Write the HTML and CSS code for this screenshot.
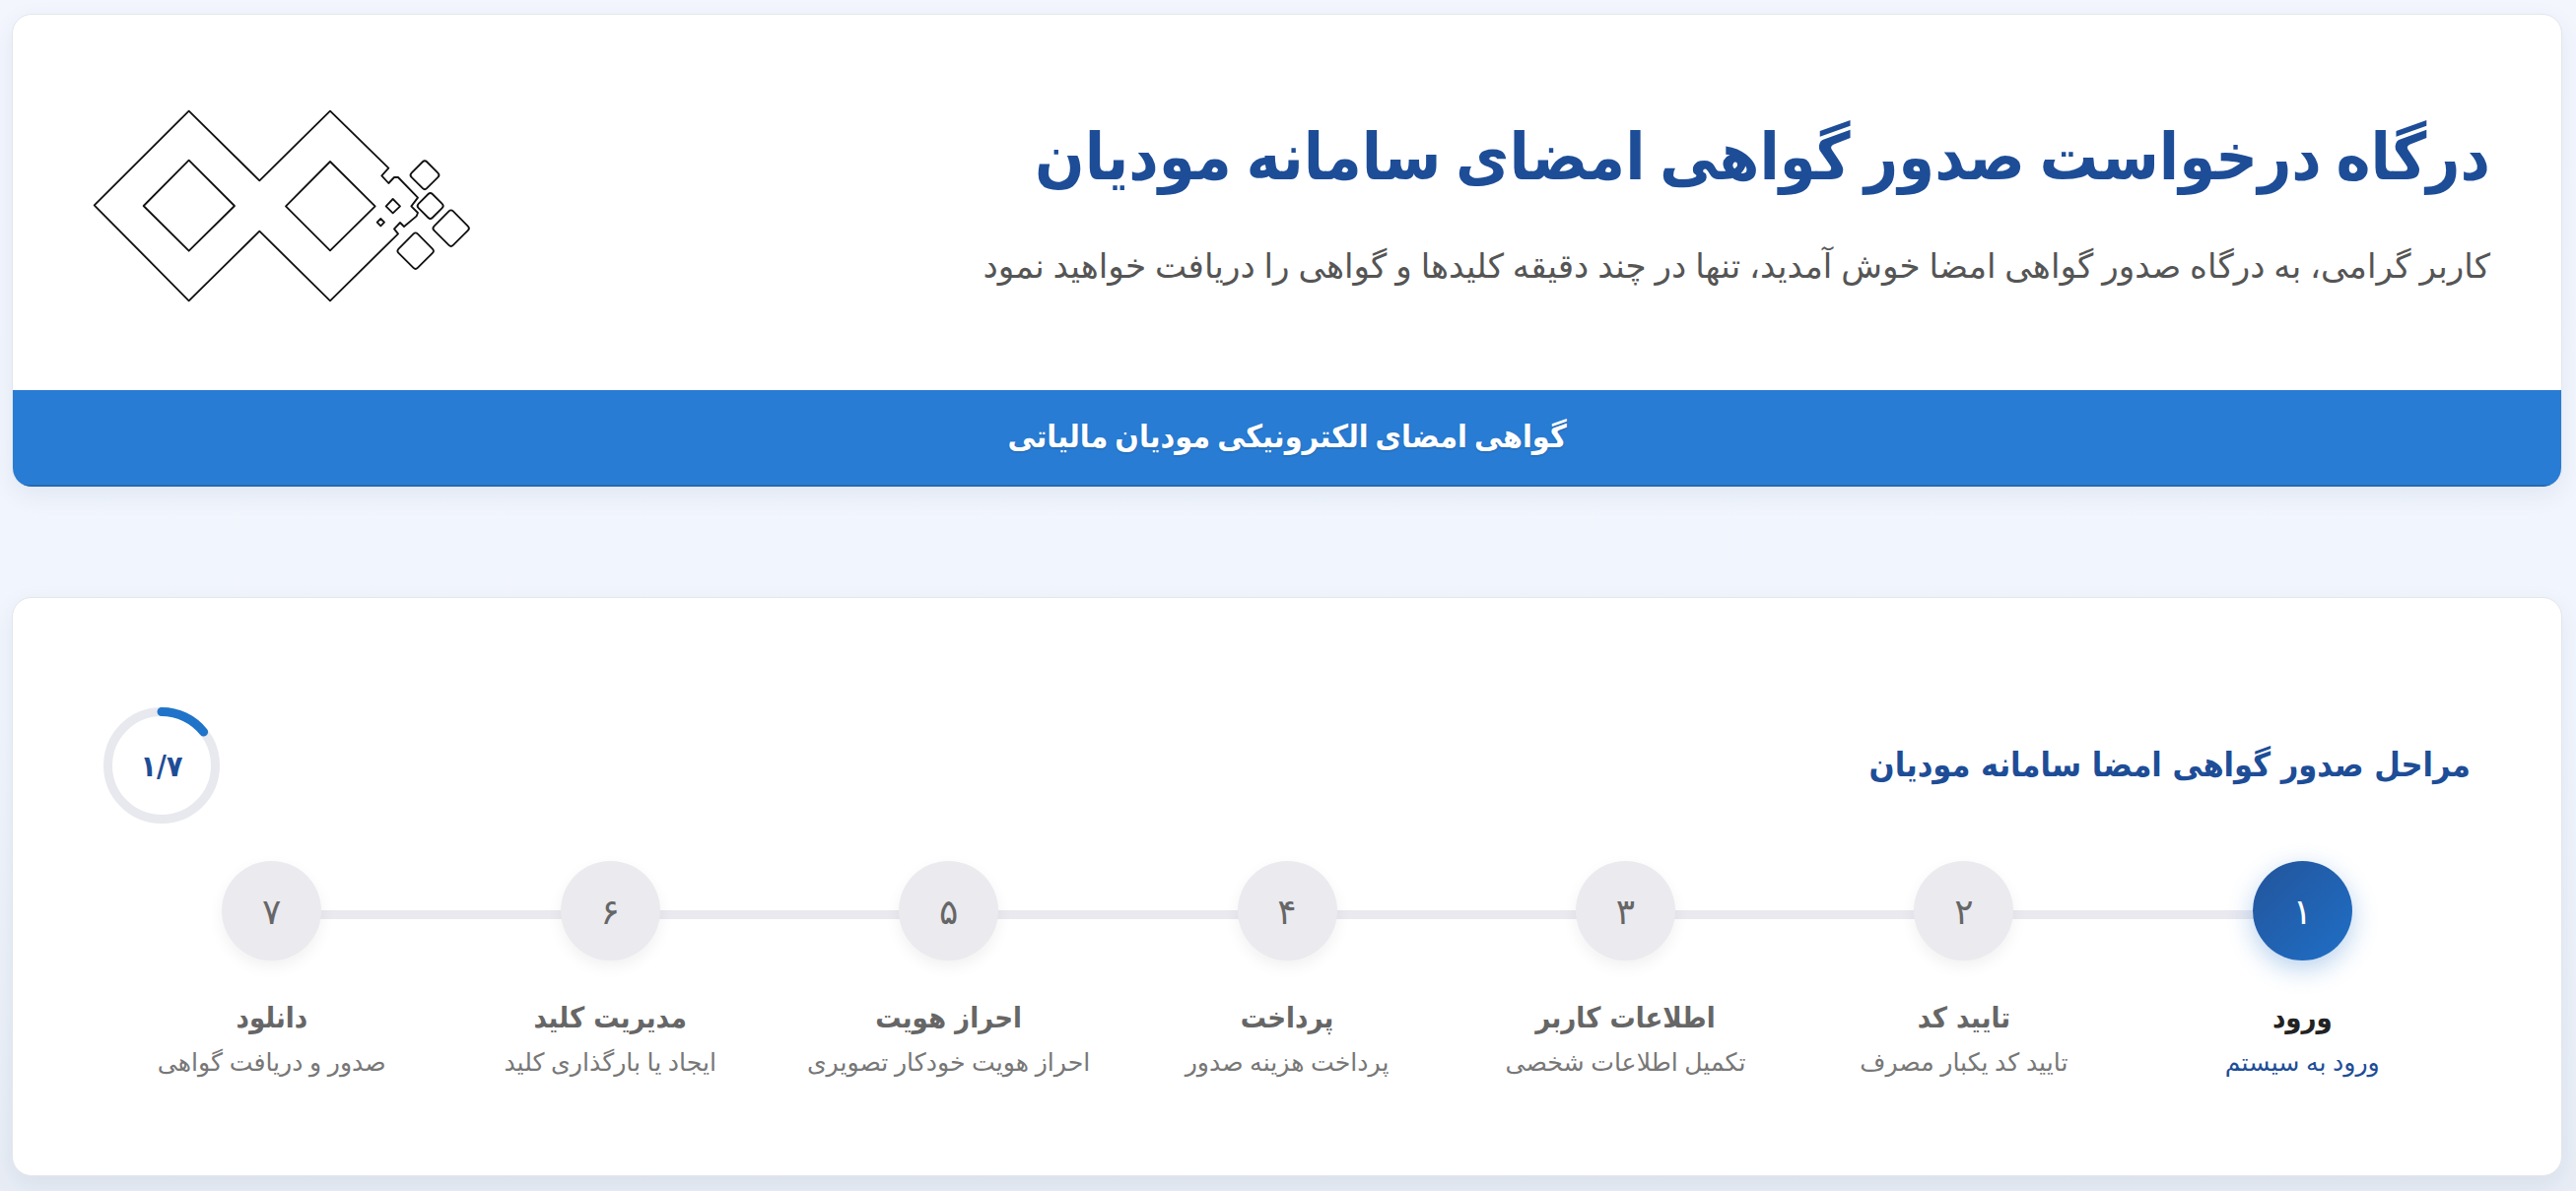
FILE: index.html
```html
<!DOCTYPE html>
<html lang="fa" dir="rtl">
<head>
<meta charset="utf-8">
<title>درگاه درخواست صدور گواهی امضای سامانه مودیان</title>
<link rel="stylesheet" href="styles.css">
</head>
<body>
<header class="card hero">
  <div class="hero-main">
    <div class="hero-text">
      <h1 class="hero-title">درگاه درخواست صدور گواهی امضای سامانه مودیان</h1>
      <p class="hero-sub">کاربر گرامی، به درگاه صدور گواهی امضا خوش آمدید، تنها در چند دقیقه کلیدها و گواهی را دریافت خواهید نمود</p>
    </div>
    <svg class="logo" viewBox="0 0 1380 780" fill="none" stroke="#111" stroke-width="5.5" stroke-linejoin="round">
      <path d="M107 385 L395 98 L610 310 L825 98 L1003 272 L982 295 L1003 318 L1020 300 L1032 300 L1092 362 L1072 388 L1092 408 L1088 418 L1050 450 L1038 438 L1020 457 L1032 472 L825 676 L610 464 L395 676 Z"/>
      <path d="M257 387 L395 248 L534 387 L395 524 Z"/>
      <path d="M690 388 L825 252 L962 388 L825 523 Z"/>
      <path d="M995 388 L1016 366 L1038 388 L1016 409 Z"/>
      <path d="M968 437 L979 426 L990 437 L979 448 Z"/>
      <rect x="1080" y="260" width="66" height="66" rx="9" transform="rotate(45 1113 293)"/>
      <rect x="1100" y="357" width="60" height="60" rx="9" transform="rotate(45 1130 387)"/>
      <rect x="1152" y="414" width="82" height="82" rx="9" transform="rotate(45 1193 455)"/>
      <rect x="1044" y="483" width="82" height="82" rx="9" transform="rotate(45 1085 524)"/>
    </svg>
  </div>
  <div class="hero-bar">گواهی امضای الکترونیکی مودیان مالیاتی</div>
</header>

<main class="card steps-card">
  <div class="steps-head">
    <h2 class="steps-title">مراحل صدور گواهی امضا سامانه مودیان</h2>
    <div class="ring">
      <svg class="ring-svg" viewBox="0 0 118 118" fill="none" stroke-width="9">
        <circle class="ring-track" cx="59" cy="59" r="54.5"/>
        <path class="ring-arc" d="M59 4.5 A54.5 54.5 0 0 1 101.6 25"/>
      </svg>
      <span class="ring-label">۱/۷</span>
    </div>
  </div>
  <ol class="steps">
    <li class="step active"><span class="step-num">۱</span><span class="step-name">ورود</span><span class="step-desc">ورود به سیستم</span></li>
    <li class="step"><span class="step-num">۲</span><span class="step-name">تایید کد</span><span class="step-desc">تایید کد یکبار مصرف</span></li>
    <li class="step"><span class="step-num">۳</span><span class="step-name">اطلاعات کاربر</span><span class="step-desc">تکمیل اطلاعات شخصی</span></li>
    <li class="step"><span class="step-num">۴</span><span class="step-name">پرداخت</span><span class="step-desc">پرداخت هزینه صدور</span></li>
    <li class="step"><span class="step-num">۵</span><span class="step-name">احراز هویت</span><span class="step-desc">احراز هویت خودکار تصویری</span></li>
    <li class="step"><span class="step-num">۶</span><span class="step-name">مدیریت کلید</span><span class="step-desc">ایجاد یا بارگذاری کلید</span></li>
    <li class="step"><span class="step-num">۷</span><span class="step-name">دانلود</span><span class="step-desc">صدور و دریافت گواهی</span></li>
  </ol>
</main>
</body>
</html>
```

FILE: styles.css
```css
* { box-sizing: border-box; }
html, body { height: 100%; }
body {
  margin: 0;
  padding: 14px 14px 14px 12px;
  background: linear-gradient(180deg, #f3f6fd 0%, #f1f5fd 60%, #e8edf5 100%);
  font-family: "Noto Sans", "DejaVu Sans", sans-serif;
  overflow: hidden;
}
.card {
  background: #fff;
  border-radius: 20px;
  border: 1px solid #e3e6ec;
  box-shadow: 0 8px 24px rgba(30, 60, 120, 0.08);
}
.hero { height: 481px; overflow: hidden; display: flex; flex-direction: column; }
.hero-main {
  flex: 1;
  display: flex;
  justify-content: space-between;
  align-items: flex-start;
  padding: 0 72px 0 47px;
}
.hero-title {
  margin: 103px 0 0;
  color: #1e4d97;
  font-family: "DejaVu Sans Condensed", "DejaVu Sans", sans-serif;
  font-size: 66px;
  line-height: 84px;
  font-weight: 700;
  word-spacing: -6px;
}
.hero-sub {
  margin: 44px 0 0;
  color: #555;
  font-size: 34.2px;
  line-height: 46px;
  font-weight: 400;
}
.logo { width: 460px; height: 260px; margin-top: 65px; flex: none; order: 1; }
.hero-bar {
  height: 98px;
  background: #287cd3;
  border-bottom: 2px solid #2469b4;
  color: #fff;
  font-family: "DejaVu Sans Condensed", "DejaVu Sans", sans-serif;
  font-size: 32px;
  font-weight: 700;
  word-spacing: -3px;
  text-align: center;
  line-height: 95px;
  text-shadow: 0 1px 2px rgba(0, 0, 0, 0.2);
}
.steps-card { height: 588px; margin-top: 111px; padding: 0 91px; }
.steps-head {
  display: flex;
  justify-content: space-between;
  align-items: center;
  padding: 111px 1px 0 0;
}
.steps-title {
  margin: 0 0 3px;
  color: #1e4d97;
  font-family: "DejaVu Sans Condensed", "DejaVu Sans", sans-serif;
  font-size: 34px;
  line-height: 48px;
  font-weight: 700;
}
.ring { position: relative; width: 118px; height: 118px; margin-left: 1px; flex: none; }
.ring-svg { display: block; width: 118px; height: 118px; }
.ring-track { stroke: #e8e9ee; }
.ring-arc { stroke: #1f74c9; stroke-linecap: round; }
.ring-label {
  position: absolute;
  inset: 0;
  display: flex;
  align-items: center;
  justify-content: center;
  color: #1e4d97;
  font-family: "DejaVu Sans Condensed", "DejaVu Sans", sans-serif;
  font-size: 30px;
  font-weight: 700;
}
.steps {
  position: relative;
  display: flex;
  list-style: none;
  margin: 38px 0 0;
  padding: 0;
}
.steps::before {
  content: "";
  position: absolute;
  top: 50px;
  left: 172px;
  right: 172px;
  height: 9px;
  background: #e9e9ef;
}
.step {
  position: relative;
  flex: 1 1 0;
  display: flex;
  flex-direction: column;
  align-items: center;
}
.step-num {
  width: 101px;
  height: 101px;
  border-radius: 50%;
  background: #eaeaef;
  color: #666;
  font-size: 36px;
  display: flex;
  align-items: center;
  justify-content: center;
  box-shadow: 0 6px 16px rgba(0, 0, 0, 0.06);
}
.step-name {
  margin-top: 36px;
  color: #666;
  font-family: "DejaVu Sans Condensed", "DejaVu Sans", sans-serif;
  font-size: 29px;
  line-height: 44px;
  font-weight: 700;
}
.step-desc { margin-top: 4px; color: #777; font-size: 25.2px; line-height: 36px; }
.active .step-num {
  background: linear-gradient(135deg, #23549b, #1f6fc6);
  color: #fff;
  box-shadow: 0 8px 26px rgba(31, 111, 198, 0.32);
}
.active .step-name { color: #222; }
.active .step-desc { color: #1e4d97; }
```
